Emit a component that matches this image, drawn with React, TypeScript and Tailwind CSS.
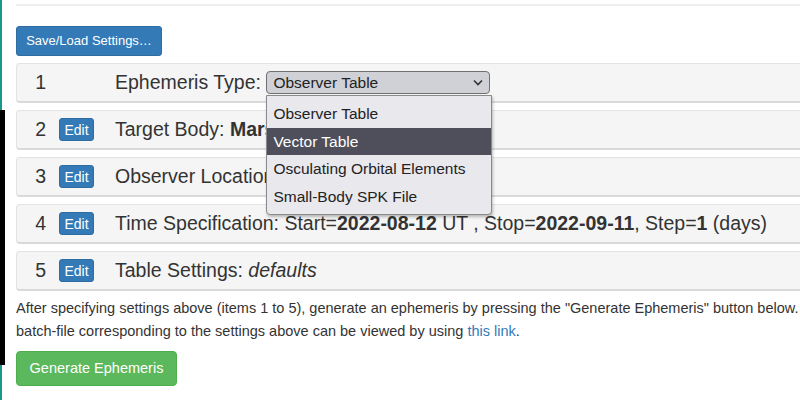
import React from "react";

const font = { fontFamily: '"Liberation Sans", Arial, sans-serif' };

const EditButton = () => (
  <button className="w-[35px] h-[23px] rounded-[3px] bg-[#337ab7] border border-[#2e6da4] text-white text-[14px] leading-none flex items-center justify-center">
    Edit
  </button>
);

const Panel = ({ num, edit = true, children }: { num: number; edit?: boolean; children: React.ReactNode }) => (
  <div className="relative h-[40px] w-[800px] flex items-center bg-[#f5f5f5] border border-[#e3e3e3] border-b-[#d9d9d9] border-b-2 rounded-[4px] text-[19.5px] text-[#333]">
    <div className="w-[29px] flex justify-end">{num}</div>
    <div className="w-[69px] pl-[13px]">{edit && <EditButton />}</div>
    <div className="whitespace-nowrap">{children}</div>
  </div>
);

const options = ["Observer Table", "Vector Table", "Osculating Orbital Elements", "Small-Body SPK File"];

export default function App() {
  return (
    <div className="flex w-[800px] h-[400px] overflow-hidden bg-white" style={font}>
      {/* left frame edge */}
      <div className="flex flex-col w-[5px] shrink-0">
        <div className="h-[110px] w-[2px] bg-[#17998a]" />
        <div className="h-[255px] w-[5px] bg-black" />
        <div className="flex-1 w-[2px] bg-[#17998a]" />
      </div>

      <div className="flex-1 pl-[11px] pt-[4px]">
        <div className="h-[2px] bg-[#eeeeee] w-[800px]" />

        <button className="mt-[20px] h-[30px] w-[146px] rounded-[3px] bg-[#337ab7] border border-[#2e6da4] text-white text-[13px]">
          Save/Load Settings…
        </button>

        <div className="mt-[7px] flex flex-col gap-[7px]">
          <Panel num={1} edit={false}>
            <div className="flex items-center">
              <span>Ephemeris Type:&nbsp;</span>
              <div className="relative">
                <div className="w-[224px] h-[23px] rounded-[4px] border border-[#707070] bg-[#d0d1d6] flex items-center justify-between pl-[6px] pr-[6px] text-[15.5px] text-[#222]">
                  <span>Observer Table</span>
                  <svg width="10" height="7" viewBox="0 0 10 7" fill="none">
                    <path d="M1 1.5 L5 5.5 L9 1.5" stroke="#333" strokeWidth="1.6" />
                  </svg>
                </div>
                <div className="absolute z-10 left-0 top-[24px] w-[226px] bg-[#e9e8ed] border border-[#8a8a8a] rounded-b-[4px] shadow-[1px_2px_3px_rgba(0,0,0,0.25)] pt-[4px] pb-[4px] text-[15.5px] text-[#222]">
                  {options.map((o) => (
                    <div
                      key={o}
                      className={`h-[27.5px] flex items-center px-[6px] ${
                        o === "Vector Table" ? "bg-[#4e4f5b] text-white" : ""
                      }`}
                    >
                      {o}
                    </div>
                  ))}
                </div>
              </div>
            </div>
          </Panel>
          <Panel num={2}>
            Target Body: <b>Mars [499]</b>
          </Panel>
          <Panel num={3}>
            Observer Location: <b>Geocentric [500]</b>
          </Panel>
          <Panel num={4}>
            Time Specification: Start=<b>2022-08-12</b> UT , Stop=<b>2022-09-11</b>, Step=<b>1</b> (days)
          </Panel>
          <Panel num={5}>
            Table Settings: <i>defaults</i>
          </Panel>
        </div>

        <p className="mt-[6px] text-[14.5px] leading-[23px] text-[#333] whitespace-nowrap">
          After specifying settings above (items 1 to 5), generate an ephemeris by pressing the "Generate Ephemeris" button below. A
          <br />
          batch-file corresponding to the settings above can be viewed by using{" "}
          <a className="text-[#337ab7]">this link</a>.
        </p>

        <button className="mt-[8px] h-[35px] w-[161px] rounded-[4px] bg-[#5cb85c] border border-[#4cae4c] text-white text-[14.5px]">
          Generate Ephemeris
        </button>
      </div>
    </div>
  );
}
